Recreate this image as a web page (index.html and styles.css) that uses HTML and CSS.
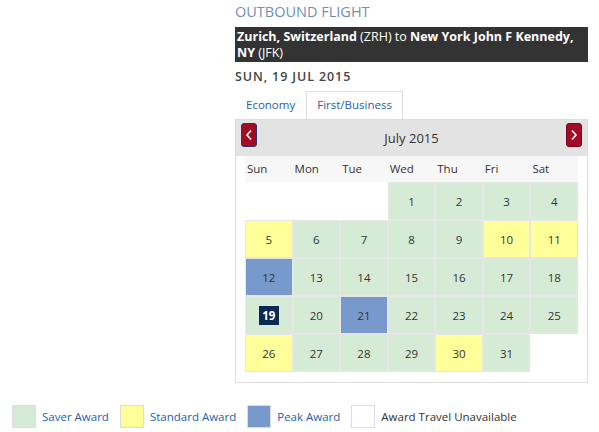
FILE: index.html
```html
<!DOCTYPE html>
<html>
<head>
<meta charset="utf-8">
<link rel="stylesheet" href="styles.css">
</head>
<body>
<div class="flight">
  <h1 class="title">OUTBOUND FLIGHT</h1>
  <div class="route"><b>Zurich, Switzerland</b> (ZRH) to <b>New York John F Kennedy, NY</b> (JFK)</div>
  <div class="date">SUN, 19 JUL 2015</div>
  <div class="tabs">
    <span class="tab">Economy</span>
    <span class="tab active">First/Business</span>
  </div>
  <div class="cal">
    <div class="cal-head">
      <span class="nav prev"><svg width="8" height="12" viewBox="0 0 8 12"><polyline points="6,1.5 2,6 6,10.5" fill="none" stroke="#fff" stroke-width="1.6"/></svg></span>
      <span class="month">July 2015</span>
      <span class="nav next"><svg width="8" height="12" viewBox="0 0 8 12"><polyline points="2,1.5 6,6 2,10.5" fill="none" stroke="#fff" stroke-width="1.6"/></svg></span>
    </div>
    <div class="cal-body">
      <div class="dow">
        <span>Sun</span><span>Mon</span><span>Tue</span><span>Wed</span><span>Thu</span><span>Fri</span><span>Sat</span>
      </div>
      <div class="days">
        <span class="empty"></span><span class="empty"></span><span class="empty"></span>
        <span class="d saver">1</span><span class="d saver">2</span><span class="d saver">3</span><span class="d saver">4</span>
        <span class="d std">5</span><span class="d saver">6</span><span class="d saver">7</span><span class="d saver">8</span><span class="d saver">9</span><span class="d std">10</span><span class="d std">11</span>
        <span class="d peak">12</span><span class="d saver">13</span><span class="d saver">14</span><span class="d saver">15</span><span class="d saver">16</span><span class="d saver">17</span><span class="d saver">18</span>
        <span class="d saver"><span class="sel">19</span></span><span class="d saver">20</span><span class="d peak">21</span><span class="d saver">22</span><span class="d saver">23</span><span class="d saver">24</span><span class="d saver">25</span>
        <span class="d std">26</span><span class="d saver">27</span><span class="d saver">28</span><span class="d saver">29</span><span class="d std">30</span><span class="d saver">31</span><span class="empty"></span>
      </div>
    </div>
  </div>
</div>
<div class="legend">
  <span class="sw saver"></span><span class="lbl link">Saver Award</span>
  <span class="sw std"></span><span class="lbl link">Standard Award</span>
  <span class="sw peak"></span><span class="lbl link">Peak Award</span>
  <span class="sw none"></span><span class="lbl">Award Travel Unavailable</span>
</div>
</body>
</html>
```
FILE: styles.css
```css
html, body {
  margin: 0;
  padding: 0;
  background: #fff;
  font-family: "Open Sans", "DejaVu Sans", sans-serif;
  color: #333;
}
.flight {
  margin-left: 235px;
  width: 353px;
}
.title {
  margin: 2px 0 5px;
  font-size: 14.5px;
  line-height: 20px;
  font-weight: 400;
  color: #6f8fb3;
}
.route {
  background: #333;
  color: #fff;
  font-size: 12.5px;
  line-height: 16px;
  padding: 2px 2px 1px;
}
.route b { font-weight: 700; }
.date {
  margin-top: 5px;
  font-size: 12.5px;
  line-height: 20px;
  font-weight: 600;
  letter-spacing: 0.9px;
  color: #444;
}
.tabs {
  display: flex;
  margin-top: 4px;
}
.tab {
  font-size: 11.5px;
  line-height: 16px;
  padding: 5px 10px 6px;
  color: #1f5ea8;
  border: 1px solid transparent;
  border-bottom: 0;
}
.tab.active {
  border-color: #ddd;
  background: #fff;
}
.cal {
  border: 1px solid #ddd;
  padding-bottom: 10px;
}
.cal-head {
  background: #e3e3e3;
  height: 36px;
  display: flex;
  align-items: flex-start;
  justify-content: space-between;
  padding: 0 5px;
}
.nav {
  margin-top: 3px;
  width: 14px;
  height: 22px;
  border-radius: 3px;
  background: #a30b24;
  border: 1px solid #7d0519;
  display: flex;
  align-items: center;
  justify-content: center;
}
.nav.prev { border-color: #2c3766; }
.month {
  font-size: 13px;
  line-height: 36px;
  color: #333;
}
.cal-body {
  padding: 0 9px;
}
.dow {
  display: grid;
  grid-template-columns: repeat(7, 1fr);
  background: #f7f7f7;
  height: 26px;
}
.dow span {
  font-size: 11.5px;
  line-height: 26px;
  padding-left: 2px;
  color: #333;
}
.days {
  display: grid;
  grid-template-columns: repeat(7, 1fr);
  grid-auto-rows: 38px;
}
.d {
  border: 1px solid #e6e6e6;
  display: flex;
  align-items: center;
  justify-content: center;
  font-size: 11.5px;
  color: #333;
}
.saver { background: #d6ebd6; }
.std { background: #ffff99; }
.peak { background: #7799cc; }
.sel {
  background: #0b2a52;
  color: #fff;
  font-weight: 700;
  width: 20px;
  height: 19px;
  line-height: 19px;
  text-align: center;
}
.legend {
  margin-top: 22px;
  padding-left: 12px;
  display: flex;
  align-items: center;
}
.sw {
  width: 22px;
  height: 21px;
  border: 1px solid #ddd;
  margin-right: 6px;
}
.sw.none { background: #fff; }
.lbl {
  font-size: 11.5px;
  line-height: 16px;
  margin-right: 11px;
  color: #333;
}
.lbl.link { color: #1f5ea8; }
```
